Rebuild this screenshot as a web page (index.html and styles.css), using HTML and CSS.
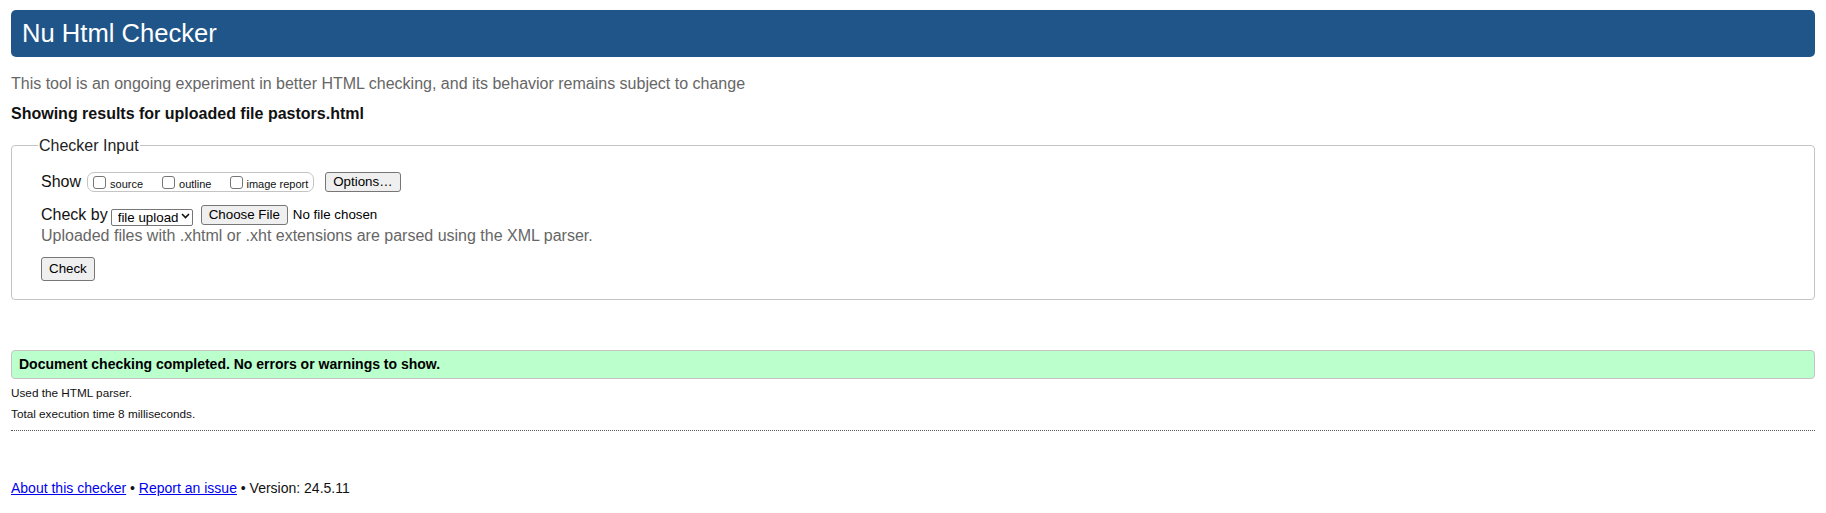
FILE: index.html
```
<!DOCTYPE html>
<html lang="en">
<head>
<meta charset="utf-8">
<title>Showing results for uploaded file pastors.html - Nu Html Checker</title>
<link rel="stylesheet" href="styles.css">
</head>
<body>
<h1 class="title">Nu Html Checker</h1>
<p class="intro">This tool is an ongoing experiment in better HTML checking, and its behavior remains subject to change</p>
<p class="showing">Showing results for uploaded file pastors.html</p>
<form class="form">
  <fieldset class="input-set">
    <legend class="legend">Checker Input</legend>
    <div class="row row-show">
      <span class="row-label">Show</span>
      <span class="show-group">
        <label class="opt"><input class="cb" type="checkbox">source</label>
        <label class="opt"><input class="cb" type="checkbox">outline</label>
        <label class="opt opt-last"><input class="cb" type="checkbox">image report</label>
      </span>
      <button type="button" class="btn btn-options">Options…</button>
    </div>
    <div class="row row-check">
      <span class="row-label">Check by</span>
      <span class="select-wrap">
        <select class="select"><option>file upload</option></select>
        <svg class="chev" width="9" height="6" viewBox="0 0 9 6"><path d="M1 1 L4.5 4.5 L8 1" fill="none" stroke="#111" stroke-width="1.6"/></svg>
      </span>
      <span class="btn btn-file">Choose File</span>
      <span class="nofile">No file chosen</span>
    </div>
    <p class="hint">Uploaded files with .xhtml or .xht extensions are parsed using the XML parser.</p>
    <div class="row row-submit">
      <button type="button" class="btn btn-check">Check</button>
    </div>
  </fieldset>
</form>
<p class="success">Document checking completed. No errors or warnings to show.</p>
<p class="stats stats-first">Used the HTML parser.</p>
<p class="stats">Total execution time 8 milliseconds.</p>
<hr class="sep">
<p class="footer"><a href="#">About this checker</a> • <a href="#">Report an issue</a> • Version: 24.5.11</p>
</body>
</html>
```
FILE: styles.css
```
html, body {
  margin: 0;
  padding: 0;
  background: #fff;
}
body {
  padding: 10px 11px 0;
  font-family: "Liberation Sans", Arial, sans-serif;
  font-size: 16px;
  line-height: 20px;
  color: #111;
}
.title {
  margin: 0;
  height: 47px;
  line-height: 47px;
  padding: 0 11px;
  background: #1f5588;
  color: #fff;
  font-size: 25.6px;
  font-weight: normal;
  border-radius: 5px;
}
.intro {
  margin: 17px 0 0;
  color: #666;
}
.showing {
  margin: 9.5px 0 0;
  font-weight: bold;
}
.form {
  margin: 12px 0 0;
}
.input-set {
  margin: 0;
  border: 1px solid #c4c4c4;
  border-radius: 4px;
  padding: 16px 29px 18px;
  min-width: 0;
}
.legend {
  padding: 0 1px;
  margin-left: -3px;
  line-height: 20px;
  color: #222;
}
.row {
  display: flex;
  align-items: center;
  height: 21px;
}
.row-label {
  color: #111;
}
.show-group {
  display: inline-flex;
  align-items: center;
  height: 18px;
  margin-left: 6px;
  padding: 0 5px;
  border: 1px solid #c4c4c4;
  border-radius: 7px;
  font-size: 11px;
}
.opt {
  display: inline-flex;
  align-items: center;
  gap: 4px;
  margin-right: 19px;
  line-height: 14px;
  padding-top: 3px;
}
.opt-last {
  margin-right: 0;
  gap: 3px;
}
.cb {
  appearance: none;
  -webkit-appearance: none;
  width: 13px;
  height: 13px;
  margin: -3px 0 0;
  border: 1px solid #767676;
  border-radius: 3px;
  background: #fff;
  box-sizing: border-box;
}
.btn {
  display: inline-flex;
  align-items: center;
  justify-content: center;
  box-sizing: border-box;
  height: 20px;
  padding: 0 7px;
  margin: 0;
  border: 1px solid #767676;
  border-radius: 3px;
  background: #efefef;
  color: #000;
  font-family: "Liberation Sans", Arial, sans-serif;
  font-size: 13.333px;
  line-height: 16px;
}
.btn-options {
  margin-left: 11px;
}
.row-check {
  margin-top: 12px;
}
.select-wrap {
  position: relative;
  display: inline-block;
  margin-left: 3px;
  height: 17px;
}
.select {
  appearance: none;
  -webkit-appearance: none;
  box-sizing: border-box;
  width: 82px;
  height: 17px;
  margin: 0;
  padding: 0 0 0 6px;
  border: 1px solid #767676;
  border-radius: 2px;
  background: #fff;
  color: #000;
  font-family: "Liberation Sans", Arial, sans-serif;
  font-size: 13.333px;
  line-height: 15px;
}
.chev {
  position: absolute;
  right: 3px;
  top: 6px;
  pointer-events: none;
}
.btn-file {
  margin-left: 8px;
}
.nofile {
  margin-left: 5px;
  font-size: 13.333px;
  color: #000;
}
.hint {
  margin: 0;
  color: #666;
}
.row-submit {
  margin-top: 11px;
  height: 24px;
}
.btn-check {
  height: 24px;
  padding: 0 7px;
}
.success {
  margin: 50px 0 0;
  height: 27px;
  line-height: 27px;
  padding: 0 7px;
  border: 1px solid #c4c4c4;
  border-radius: 4px;
  background: #bbffcc;
  font-size: 14px;
  font-weight: bold;
  color: #000;
}
.stats {
  margin: 0;
  font-size: 11.75px;
  line-height: 20.7px;
  color: #111;
}
.stats-first {
  margin-top: 4.3px;
}
.sep {
  margin: 5.4px 0 0;
  height: 0;
  border: 0;
  border-top: 1px dotted #555;
}
.footer {
  margin: 47.5px 0 0;
  font-size: 14px;
  line-height: 20px;
  color: #111;
}
.footer a {
  color: #0000ee;
}
```
